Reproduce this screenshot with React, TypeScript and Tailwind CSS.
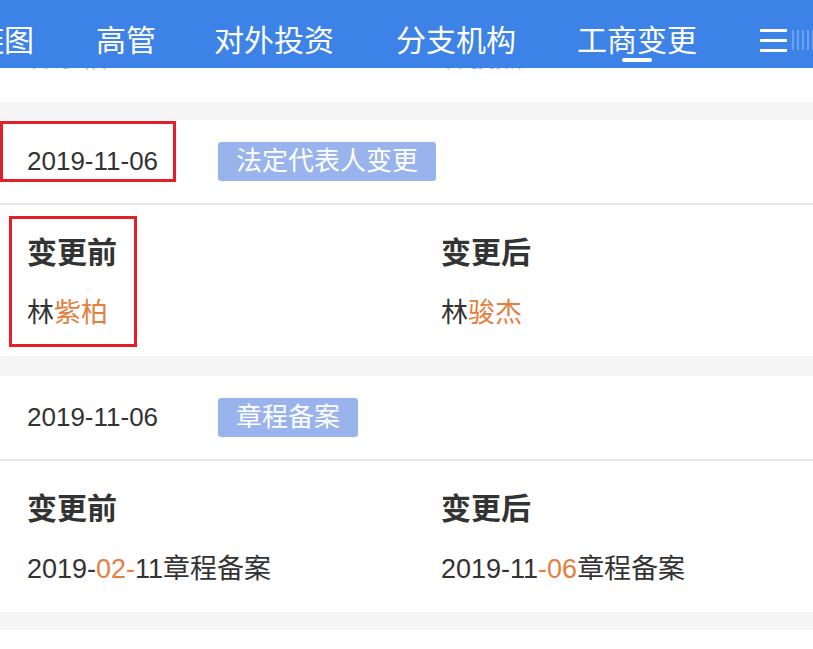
import React from "react";

const tabs = [
  { label: "高管", ml: "ml-[62px]" },
  { label: "对外投资", ml: "ml-[58px]" },
  { label: "分支机构", ml: "ml-[62px]" },
];

function ChangeCard({
  date,
  tag,
  before,
  after,
}: {
  date: string;
  tag: string;
  before: React.ReactNode;
  after: React.ReactNode;
}) {
  return (
    <div className="bg-white">
      <div className="h-[85px] flex items-center pl-[27px] border-b-2 border-[#e8e8e8]">
        <span className="w-[191px] text-[26px] text-[#333]">{date}</span>
        <span className="h-[39px] px-[18px] flex items-center rounded-[3px] bg-[#99b3ec] text-white text-[26px]">
          {tag}
        </span>
      </div>
      <div className="h-[151px] grid grid-cols-[414px_1fr] pl-[27px] pt-[27px]">
        <div className="flex flex-col">
          <span className="text-[30px] font-bold text-[#333] leading-[42px]">变更前</span>
          <span className="mt-[21px] text-[27px] text-[#333] leading-[36px]">{before}</span>
        </div>
        <div className="flex flex-col">
          <span className="text-[30px] font-bold text-[#333] leading-[42px]">变更后</span>
          <span className="mt-[21px] text-[27px] text-[#333] leading-[36px]">{after}</span>
        </div>
      </div>
    </div>
  );
}

const Or = ({ children }: { children: React.ReactNode }) => (
  <span className="text-[#e3803f]">{children}</span>
);

export default function App() {
  return (
    <div className="relative w-[813px] h-[649px] overflow-hidden bg-[#f5f5f6] font-['Liberation_Sans','Noto_Sans_CJK_SC',sans-serif]">
      {/* tab bar */}
      <div className="h-[68px] pt-[12px] bg-[#3d82e6] flex items-center text-white text-[30px] whitespace-nowrap overflow-hidden">
        <span className="ml-[-26px]">链图</span>
        {tabs.map((t) => (
          <span key={t.label} className={t.ml}>
            {t.label}
          </span>
        ))}
        <span className="relative ml-[61px]">
          工商变更
          <span className="absolute left-1/2 -translate-x-1/2 top-[40px] w-[30px] h-[4px] rounded-full bg-white" />
        </span>
        <div className="ml-[63px] flex flex-col gap-[7px]">
          <span className="block w-[27px] h-[3px] bg-white" />
          <span className="block w-[27px] h-[3px] bg-white" />
          <span className="block w-[27px] h-[3px] bg-white" />
        </div>
        <div className="ml-[5px] flex gap-[3px] opacity-25">
          <span className="block w-[2px] h-[20px] bg-white" />
          <span className="block w-[2px] h-[20px] bg-white" />
          <span className="block w-[2px] h-[20px] bg-white" />
          <span className="block w-[2px] h-[20px] bg-white" />
          <span className="block w-[2px] h-[20px] bg-white" />
        </div>
      </div>

      {/* previous row, scrolled under the bar */}
      <div className="h-[34px] bg-white overflow-hidden">
        <div className="mt-[-25px] grid grid-cols-[414px_1fr] pl-[27px] text-[27px] leading-[31px] text-[#bbb]">
          <span>林紫柏</span>
          <span>
            林<span className="text-[#9ab3ea]">骏杰</span>
          </span>
        </div>
      </div>

      <div className="h-[18px]" />
      <ChangeCard
        date="2019-11-06"
        tag="法定代表人变更"
        before={
          <>
            林<Or>紫柏</Or>
          </>
        }
        after={
          <>
            林<Or>骏杰</Or>
          </>
        }
      />
      <div className="h-[20px]" />
      <ChangeCard
        date="2019-11-06"
        tag="章程备案"
        before={
          <>
            2019-<Or>02-</Or>11章程备案
          </>
        }
        after={
          <>
            2019-11<Or>-06</Or>章程备案
          </>
        }
      />
      <div className="h-[18px]" />
      <div className="h-[40px] bg-white" />

      {/* annotation boxes */}
      <div className="absolute left-0 top-[121px] w-[176px] h-[61px] border-[3px] border-[#e3202a]" />
      <div className="absolute left-[9px] top-[216px] w-[128px] h-[131px] border-[3px] border-[#e3202a]" />
    </div>
  );
}
